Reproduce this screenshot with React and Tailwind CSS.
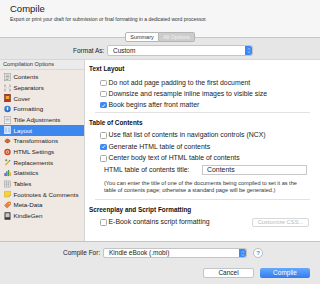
import React from 'react';

const font = { fontFamily: '"Liberation Sans", Arial, sans-serif' };

function Icon({ name, selected }) {
    switch (name) {
        case 'contents':
            return (
                <svg width="7" height="8" viewBox="0 0 14 16">
                    <rect x="1" y="0.5" width="12" height="15" fill="#f4f4f4" stroke="#8a8a8a" />
                    <path d="M3 4h8M3 7h8M3 10h8M3 13h6" stroke="#777" strokeWidth="1.2" />
                </svg>
            );
        case 'separators':
            return (
                <svg width="7" height="8" viewBox="0 0 14 16">
                    <path d="M2 1v5M2 10v5M12 1v5M12 10v5" stroke="#999" strokeWidth="2" />
                    <path d="M1 8h12" stroke="#bbb" strokeWidth="1.5" strokeDasharray="2 1.5" />
                </svg>
            );
        case 'cover':
            return (
                <svg width="7" height="8" viewBox="0 0 14 16">
                    <rect x="1" y="0.5" width="12" height="15" fill="#b5391c" stroke="#6e2010" />
                    <rect x="3.5" y="4" width="7" height="6" fill="#f2a53a" />
                </svg>
            );
        case 'formatting':
            return (
                <svg width="8" height="8" viewBox="0 0 16 16">
                    <circle cx="8" cy="8" r="7.3" fill="#2f6fc4" />
                    <circle cx="8" cy="6" r="4.5" fill="#5d9ae6" />
                    <rect x="7" y="4" width="2" height="7" fill="#fff" />
                </svg>
            );
        case 'title':
            return (
                <svg width="7" height="8" viewBox="0 0 14 16">
                    <rect x="1" y="0.5" width="12" height="15" fill="#f7f7f7" stroke="#8f8f8f" />
                    <path d="M3 4h8M3 7h8M3 10h8" stroke="#999" strokeWidth="1.2" />
                </svg>
            );
        case 'layout':
            return (
                <svg width="7" height="8" viewBox="0 0 14 16">
                    <rect x="1" y="0.5" width="12" height="15" fill={selected ? '#dbe8fb' : '#f4f4f4'} stroke={selected ? '#ffffff' : '#8a8a8a'} />
                    <path d="M4 3v10M10 3v10" stroke={selected ? '#7aa7e6' : '#999'} strokeWidth="1.5" />
                </svg>
            );
        case 'transformations':
            return (
                <svg width="8" height="8" viewBox="0 0 16 16">
                    <path d="M1 6l7-4 7 4-7 4z" fill="#c8621f" />
                    <path d="M1 9l7 4 7-4-2-1-5 3-5-3z" fill="#8c3b14" />
                </svg>
            );
        case 'html':
            return (
                <svg width="8" height="8" viewBox="0 0 16 16">
                    <circle cx="8" cy="8" r="7.3" fill="#d0481f" />
                    <circle cx="8" cy="8" r="4" fill="#f6c7a8" />
                    <circle cx="8" cy="8" r="2" fill="#d0481f" />
                </svg>
            );
        case 'replacements':
            return (
                <svg width="8" height="8" viewBox="0 0 16 16">
                    <path d="M2 14l9-9 2 2-9 9z" fill="#e39b2f" />
                    <path d="M11 5l2-2 2 2-2 2z" fill="#4b78c2" />
                    <path d="M2 4l3-3 3 3-3 3z" fill="#6a9a3c" />
                </svg>
            );
        case 'statistics':
            return (
                <svg width="8" height="8" viewBox="0 0 16 16">
                    <rect x="1" y="8" width="3" height="7" fill="#7a3fa8" />
                    <rect x="5" y="4" width="3" height="11" fill="#3a6bc4" />
                    <rect x="9" y="1" width="3" height="14" fill="#4f9a3a" />
                    <rect x="13" y="6" width="2.5" height="9" fill="#e3a02a" />
                </svg>
            );
        case 'tables':
            return (
                <svg width="8" height="8" viewBox="0 0 16 16">
                    <rect x="1" y="1" width="14" height="14" fill="#f1f1f1" stroke="#888" />
                    <path d="M1 5.5h14M1 10h14M5.5 1v14M10 1v14" stroke="#888" />
                </svg>
            );
        case 'footnotes':
            return (
                <svg width="8" height="8" viewBox="0 0 16 16">
                    <path d="M1 2h14v9l-4 4H1z" fill="#f3d23a" stroke="#c49d16" />
                    <path d="M11 15v-4h4" fill="#e0b520" />
                </svg>
            );
        case 'meta':
            return (
                <svg width="8" height="8" viewBox="0 0 16 16">
                    <path d="M1 9l8-8h6v6l-8 8z" fill="#e8843a" stroke="#b85a1c" />
                    <circle cx="12" cy="4" r="1.3" fill="#fff" />
                </svg>
            );
        case 'kindle':
            return (
                <svg width="7" height="8" viewBox="0 0 14 16">
                    <rect x="1" y="0.5" width="12" height="15" rx="1" fill="#3a3a3a" />
                    <rect x="3" y="2.5" width="8" height="8" fill="#c9c9c9" />
                </svg>
            );
        default:
            return null;
    }
}

const items = [
    ['contents', 'Contents'],
    ['separators', 'Separators'],
    ['cover', 'Cover'],
    ['formatting', 'Formatting'],
    ['title', 'Title Adjustments'],
    ['layout', 'Layout'],
    ['transformations', 'Transformations'],
    ['html', 'HTML Settings'],
    ['replacements', 'Replacements'],
    ['statistics', 'Statistics'],
    ['tables', 'Tables'],
    ['footnotes', 'Footnotes & Comments'],
    ['meta', 'Meta-Data'],
    ['kindle', 'KindleGen'],
];

function Checkbox({ checked }) {
    return checked ? (
        <span className="w-[6.5px] h-[6.5px] rounded-[1.5px] bg-[#3b8af3] flex items-center justify-center shrink-0">
            <svg width="5" height="5" viewBox="0 0 10 10">
                <path d="M2 5.5l2 2L8 2.5" stroke="#fff" strokeWidth="1.8" fill="none" />
            </svg>
        </span>
    ) : (
        <span className="w-[6.5px] h-[6.5px] rounded-[1.5px] bg-white border-[0.5px] border-[#a9a9a9] shrink-0" />
    );
}

function CheckRow({ checked, label, h = 'h-[11px]' }) {
    return (
        <div className={`${h} flex items-center pl-[11px] gap-[2px] text-[6.9px] text-[#222]`}>
            <Checkbox checked={checked} />
            <span>{label}</span>
        </div>
    );
}

function Stepper() {
    return (
        <span className="w-[7px] h-full bg-[#3b8af3] rounded-r-[2px] flex items-center justify-center">
            <svg width="4" height="7" viewBox="0 0 8 14">
                <path d="M2 5l2-2 2 2M2 9l2 2 2-2" stroke="#fff" strokeWidth="1.3" fill="none" />
            </svg>
        </span>
    );
}

export default function App() {
    return (
        <div className="w-[320px] h-[284px] flex flex-col overflow-hidden bg-[#e8e8e8] text-[#222]" style={font}>
            <div className="h-[38px] bg-[#f6f6f6] border-b border-[#c6c6c6] px-[10px] pt-[3px] shrink-0">
                <div className="text-[9.5px] leading-[12px] text-[#1a1a1a]">Compile</div>
                <div className="text-[5px] leading-[7px] mt-[1px] text-[#333]">Export or print your draft for submission or final formatting in a dedicated word processor.</div>
            </div>
            <div className="bg-[#e6e6e6] border-b border-[#d6d6d6] pb-[3px] shrink-0">
                <div className="-mt-[6px] h-[10px] flex justify-center">
                    <div className="flex text-[5.5px]">
                        <span className="w-[34px] flex items-center justify-center bg-white border-[0.5px] border-[#b5b5b5] rounded-l-[2px] text-[#333]">Summary</span>
                        <span className="w-[36px] flex items-center justify-center bg-[#cdcdcd] border-[0.5px] border-l-0 border-[#b5b5b5] rounded-r-[2px] text-[#f2f2f2]">All Options</span>
                    </div>
                </div>
                <div className="mt-[3px] h-[11px] flex items-center pl-[73px] text-[6.5px]">
                    <span className="w-[34px]">Format As:</span>
                    <div className="w-[146px] h-full flex bg-white border-[0.5px] border-[#c4c4c4] rounded-[2px]">
                        <span className="flex-1 pl-[5px] flex items-center">Custom</span>
                        <Stepper />
                    </div>
                </div>
            </div>
            <div className="h-[182px] flex border-b border-[#c4c4c4] shrink-0">
                <div className="w-[85px] bg-[#efe8e3] border-r border-[#d3d3d3] flex flex-col">
                    <div className="h-[10px] bg-[#ebebeb] border-b border-[#d8d8d8] pl-[3px] flex items-center text-[5.7px] text-[#333]">Compilation Options</div>
                    <div className="pt-[1.5px]">
                        {items.map(([key, label]) => {
                            const selected = key === 'layout';
                            return (
                                <div key={key} className={`h-[10.7px] flex items-center pl-[4px] gap-[2.5px] text-[6.2px] ${selected ? 'bg-[#3d88ef] text-white' : 'text-[#222]'}`}>
                                    <span className="w-[7px] flex justify-center"><Icon name={key} selected={selected} /></span>
                                    <span>{label}</span>
                                </div>
                            );
                        })}
                    </div>
                </div>
                <div className="flex-1 bg-white pl-[4px] pt-[4px] flex flex-col">
                    <div className="h-[10px] flex items-center text-[6.4px] font-bold text-[#111]">Text Layout</div>
                    <div className="mt-[3.5px]">
                        <CheckRow label="Do not add page padding to the first document" />
                        <CheckRow label="Downsize and resample inline images to visible size" />
                        <CheckRow checked label="Book begins after front matter" />
                    </div>
                    <div className="mt-[1.5px] ml-[6px] mr-[10px] border-t border-[#e2e2e2]" />
                    <div className="mt-[5px] h-[10px] flex items-center text-[6.4px] font-bold text-[#111]">Table of Contents</div>
                    <div className="mt-[1.5px]">
                        <CheckRow h="h-[11.5px]" label="Use flat list of contents in navigation controls (NCX)" />
                        <CheckRow h="h-[11.5px]" checked label="Generate HTML table of contents" />
                        <CheckRow h="h-[11.5px]" label="Center body text of HTML table of contents" />
                    </div>
                    <div className="h-[11.5px] flex items-center pl-[15px] text-[6.9px]">
                        <span className="w-[98px]">HTML table of contents title:</span>
                        <div className="w-[105px] h-[9.5px] border-[0.5px] border-[#c8c8c8] flex items-center pl-[4px]">Contents</div>
                    </div>
                    <div className="mt-[4px] pl-[15px] pr-[10px] text-[5.6px] leading-[7px] text-[#333]">
                        (You can enter the title of one of the documents being compiled to set it as the table of contents page; otherwise a standard page will be generated.)
                    </div>
                    <div className="mt-[5px] ml-[6px] mr-[10px] border-t border-[#e2e2e2]" />
                    <div className="mt-[5px] h-[10px] flex items-center text-[6.4px] font-bold text-[#111]">Screenplay and Script Formatting</div>
                    <div className="mt-[2.5px] h-[11px] flex items-center pr-[11px]">
                        <div className="flex-1"><CheckRow label="E-Book contains script formatting" /></div>
                        <span className="w-[57px] h-[9px] border-[0.5px] border-[#d8d8d8] rounded-[2px] flex items-center justify-center text-[5.8px] text-[#b9b9b9]">Customize CSS...</span>
                    </div>
                </div>
            </div>
            <div className="flex-1 flex flex-col">
                <div className="mt-[6px] h-[10px] flex items-center pl-[63px] text-[6.5px]">
                    <span className="w-[40px]">Compile For:</span>
                    <div className="w-[144px] h-full flex bg-white border-[0.5px] border-[#c4c4c4] rounded-[2px]">
                        <span className="flex-1 pl-[5px] flex items-center">Kindle eBook (.mobi)</span>
                        <Stepper />
                    </div>
                    <span className="ml-[6px] w-[10px] h-[10px] rounded-full bg-white border-[0.5px] border-[#bdbdbd] flex items-center justify-center text-[6px] font-bold text-[#3b8af3]">?</span>
                </div>
                <div className="mt-[10px] h-[9.5px] flex justify-end gap-[6px] pr-[10px] text-[6.5px]">
                    <span className="w-[51px] bg-white border-[0.5px] border-[#c4c4c4] rounded-[2px] flex items-center justify-center">Cancel</span>
                    <span className="w-[50px] bg-gradient-to-b from-[#67a8fa] to-[#2f7cf2] rounded-[2px] flex items-center justify-center text-white">Compile</span>
                </div>
            </div>
        </div>
    );
}
